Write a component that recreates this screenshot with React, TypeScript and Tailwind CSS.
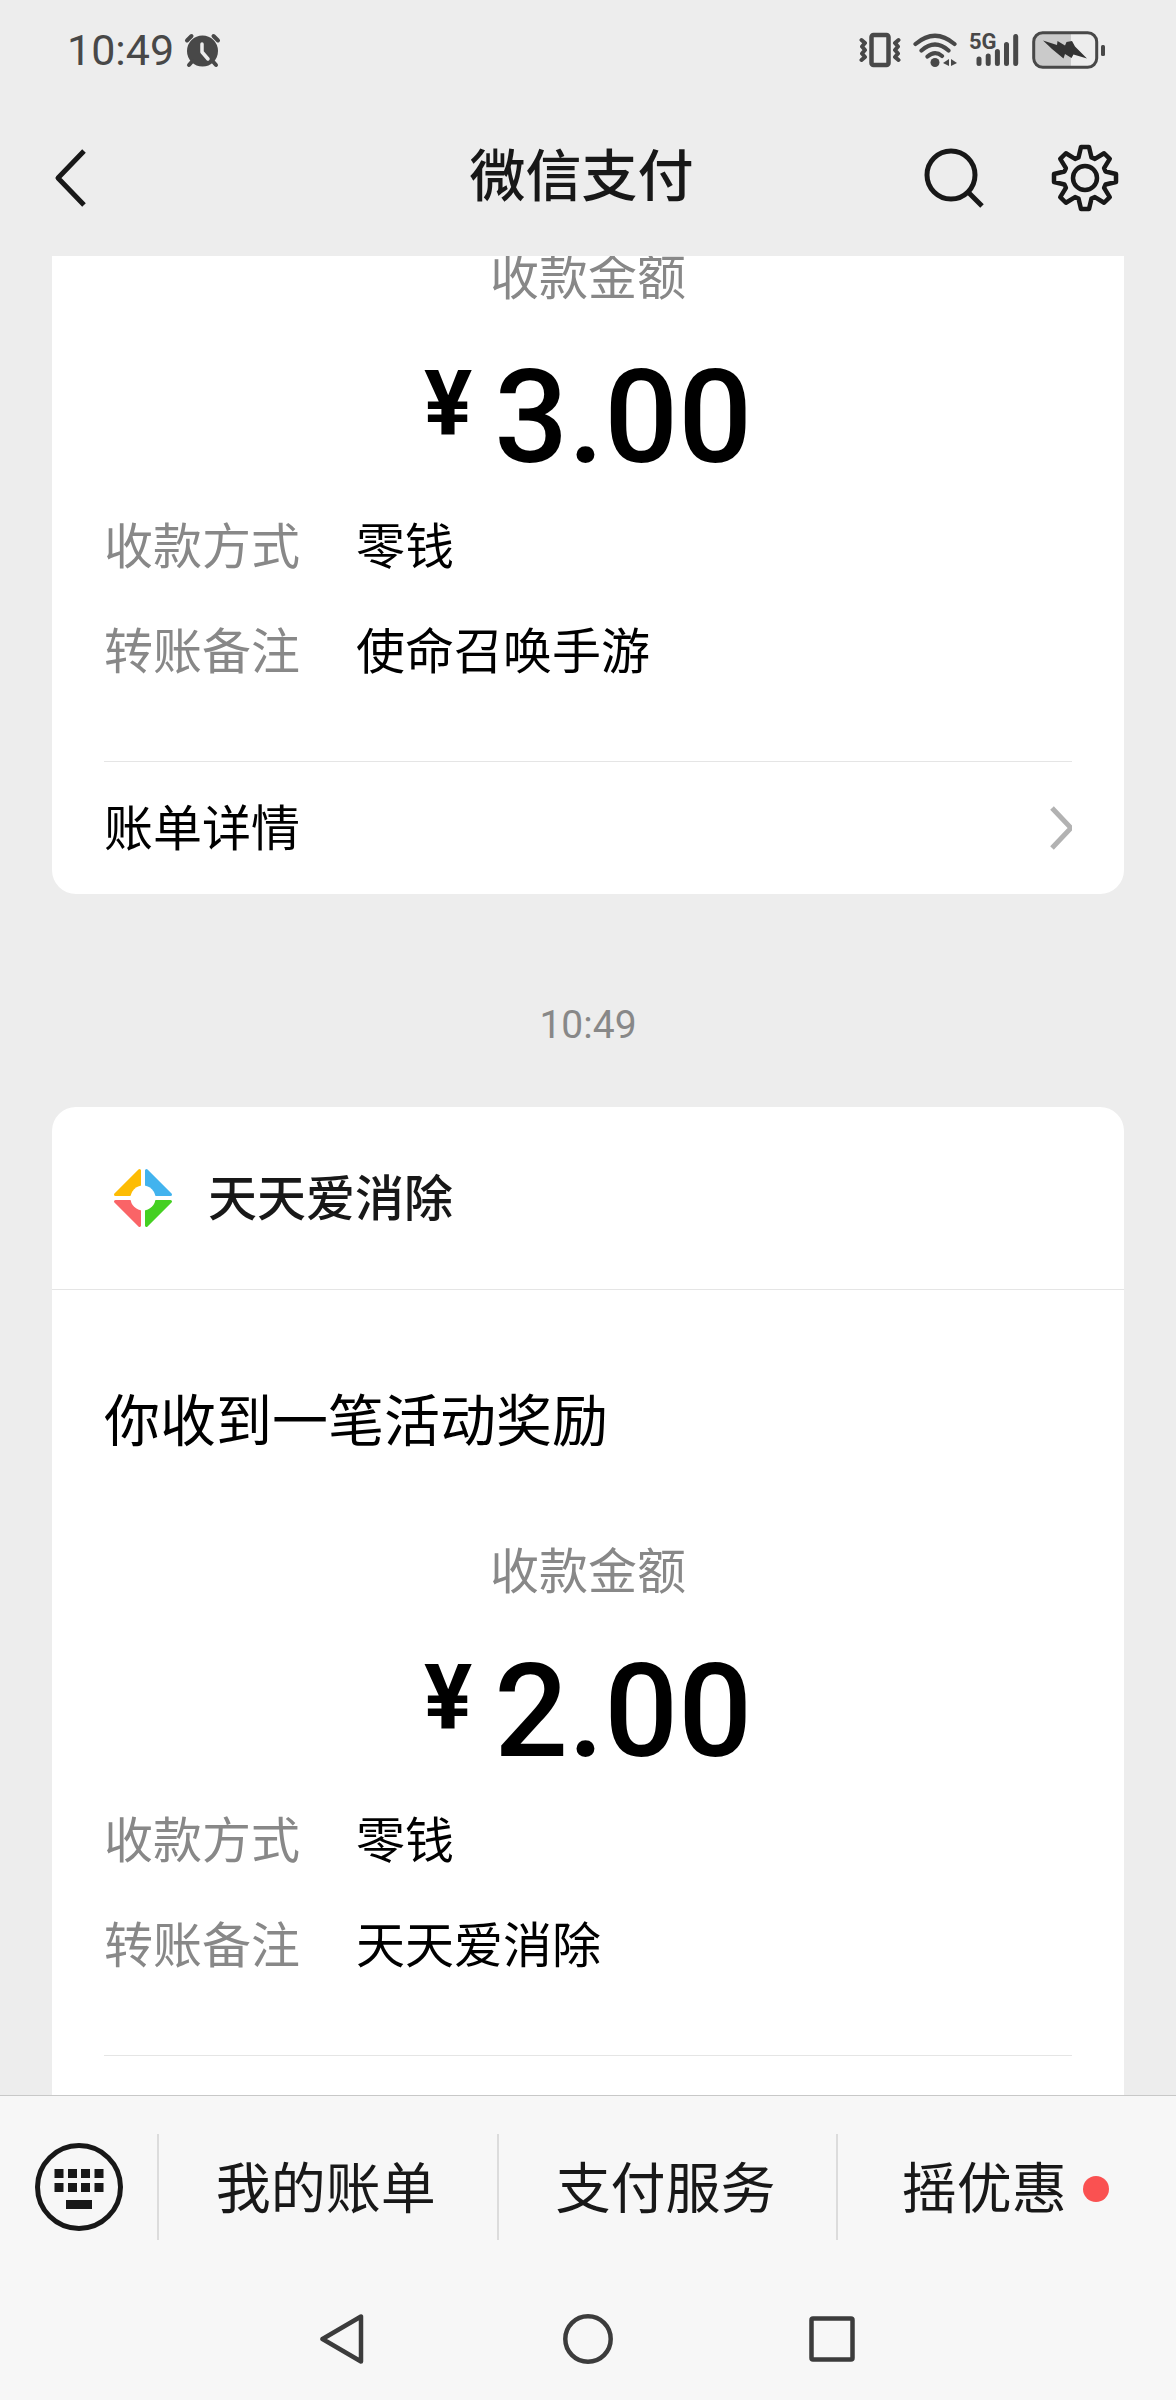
import React from "react";

type Row = { label: string; value: string };

const StatusBar: React.FC = () => {
  return (
    <div className="flex h-[100px] items-center justify-between pl-[67px] pr-[70px] text-[#484848]">
      <div className="flex items-center gap-[10px]">
        <time className="font-['Roboto',sans-serif] text-[43px] leading-none">10:49</time>
        <svg aria-label="闹钟" width="37" height="35" viewBox="0 0 37 35" fill="none" stroke="currentColor" strokeWidth="4" strokeLinecap="round">
          <circle cx="18.5" cy="18" r="15.5" fill="currentColor" stroke="none" />
          <path d="M3 7.5L7.5 3M34 7.5L29.5 3M8.5 28L5 32M28.5 28L32 32" />
          <path d="M18 11V19L24 26" stroke="#ededed" strokeWidth="3.5" strokeLinejoin="round" />
        </svg>
      </div>
      <div className="flex items-center gap-3">
        <svg aria-label="振动" width="42" height="36" viewBox="0 0 42 36" fill="none" stroke="currentColor" strokeWidth="4.5" strokeLinejoin="round" strokeLinecap="round">
          <rect x="12.5" y="3" width="17" height="30" rx="2" />
          <path d="M2.500 8L6 11L3 14.500L6 18L3 21.500L6 25L2.500 28M39.500 8L36 11L39 14.500L36 18L39 21.500L36 25L39.500 28" strokeWidth="4" />
        </svg>
        <svg aria-label="无线网络" width="44" height="36" viewBox="0 0 44 36" fill="none" stroke="currentColor" strokeWidth="4.200" strokeLinecap="round">
          <path d="M2.500 12Q22 -4.500 41.500 12M8.500 18.500Q22 6.500 35.500 18.500M14.500 24.500Q22 18 29 24" />
          <circle cx="22" cy="30.500" r="4.500" fill="currentColor" stroke="none" />
          <path d="M30 31L36 27V34ZM44 31L38 27V34Z" fill="currentColor" stroke="none" />
        </svg>
        <svg aria-label="5G 信号" width="51" height="36" viewBox="0 0 51 36" fill="none" stroke="currentColor" strokeWidth="5" strokeLinecap="round" className="overflow-visible">
          <text x="0" y="17" fill="currentColor" stroke="none" fontFamily="Roboto, sans-serif" fontWeight="700" fontSize="22">5G</text>
          <path d="M10 27V31.500M19.200 24V31.500M28.400 19.500V31.500M37.500 12.500V31.500M46.700 4.500V31.500" />
        </svg>
        <svg aria-label="正在充电" width="74" height="38" viewBox="0 0 74 38" fill="none">
          <path d="M10 2H39V36H10Q2 36 2 28V10Q2 2 10 2Z" fill="#cacaca" />
          <rect x="1.700" y="1.700" width="63" height="34.600" rx="9" stroke="currentColor" strokeWidth="3" />
          <path d="M11 9.500L25 14L25.500 10L33 14.500L34.500 11L40 10L43 15.500L55 27.500L41.500 23.500L39.500 27L33 23L31.500 27.500L20 18Z" fill="#333" />
          <rect x="69" y="14" width="4" height="11" rx="1.500" fill="currentColor" />
        </svg>
      </div>
    </div>
  );
};

// one tooth of the gear, repeated every 45 degrees
const TOOTH = [[-6.5, -20.5], [-4, -31], [4, -31], [6.5, -20.5]];

const GearIcon: React.FC = () => {
  const points = Array.from({ length: 8 }).flatMap((_, i) => {
    const a = (i * Math.PI) / 4;
    return TOOTH.map(([x, y]) => `${x * Math.cos(a) - y * Math.sin(a)},${x * Math.sin(a) + y * Math.cos(a)}`);
  });
  return (
    <svg width="68" height="68" viewBox="-34 -34 68 68" fill="none" stroke="currentColor" strokeWidth="4.500" strokeLinejoin="round">
      <polygon points={points.join(" ")} />
      <circle r="12" />
    </svg>
  );
};

const TitleBar: React.FC = () => {
  return (
    <div className="grid h-[156px] grid-cols-[1fr_auto_1fr] items-center pl-[52px] pr-[57px] text-[#181818]">
      <button type="button" aria-label="返回" className="justify-self-start">
        <svg width="36" height="60" viewBox="0 0 36 60" fill="none" stroke="currentColor" strokeWidth="5" strokeLinejoin="round">
          <path d="M32 3L6 30L32 57" />
        </svg>
      </button>
      <h1 className="pb-3 pr-2 text-[56px] font-medium leading-[64px]">微信支付</h1>
      <div className="flex items-center gap-[67px] justify-self-end">
        <button type="button" aria-label="搜索">
          <svg width="62" height="62" viewBox="0 0 62 62" fill="none" stroke="currentColor" strokeWidth="5">
            <circle cx="29" cy="28" r="24" />
            <path d="M46 45L60 59" />
          </svg>
        </button>
        <button type="button" aria-label="设置">
          <GearIcon />
        </button>
      </div>
    </div>
  );
};

const Receipt: React.FC<{ amount: string; rows: Row[] }> = ({ amount, rows }) => {
  return (
    <div className="border-b border-[#e5e5e5] pb-[85px]">
      <p className="text-center text-[49px] leading-[56px] text-[#888]">收款金额</p>
      <p className="mt-[51px] flex items-start justify-center gap-[22px] font-['Roboto',sans-serif] text-[130px] font-medium leading-none">
        <span className="mt-[7px] text-[90px] font-bold leading-none">¥</span>
        <span>{amount}</span>
      </p>
      <dl className="mt-8 flex flex-col gap-[49px] text-[49px] leading-[56px]">
        {rows.map((row) => (
          <div key={row.label} className="grid grid-cols-[252px_1fr]">
            <dt className="text-[#888]">{row.label}</dt>
            <dd>{row.value}</dd>
          </div>
        ))}
      </dl>
    </div>
  );
};

const PayLogo: React.FC = () => {
  return (
    <svg aria-hidden="true" width="60" height="60" viewBox="0 0 60 60" strokeWidth="3" strokeLinejoin="round">
      <path d="M26.500 2.500V17.500A13.500 13.500 0 0 0 17 26.500H2.500Z" fill="#fdbc04" stroke="#fdbc04" />
      <path d="M33.500 2.500V17.500A13.500 13.500 0 0 1 43 26.500H57.500Z" fill="#42b3ee" stroke="#42b3ee" />
      <path d="M26.500 57.500V42.500A13.500 13.500 0 0 1 17 33.500H2.500Z" fill="#fa6467" stroke="#fa6467" />
      <path d="M33.500 57.500V42.500A13.500 13.500 0 0 0 43 33.500H57.500Z" fill="#45d022" stroke="#45d022" />
      <circle cx="30" cy="30" r="12.500" fill="#fff" />
    </svg>
  );
};

const BottomMenu: React.FC = () => {
  return (
    <nav className="flex h-[182px] items-center text-[55px] leading-[64px] text-[#181818]">
      <button type="button" aria-label="键盘" className="w-[157px] pl-[35px]">
        <svg width="88" height="88" viewBox="0 0 88 88" fill="none">
          <circle cx="44" cy="44" r="41.500" stroke="currentColor" strokeWidth="5" />
          <path d="M19.500 26h9v9h-9zM33 26h9v9h-9zM46 26h9v9h-9zM59.500 26h9v9h-9zM19.500 40h9v9h-9zM33 40h9v9h-9zM46 40h9v9h-9zM59.500 40h9v9h-9zM31 57h26v9h-26z" fill="currentColor" />
        </svg>
      </button>
      <button type="button" className="h-[106px] flex-1 border-l-2 border-[#dcdcdc] pb-[6px] pr-1">我的账单</button>
      <button type="button" className="h-[106px] flex-1 border-l-2 border-[#dcdcdc] pb-[6px] pr-1">支付服务</button>
      <button type="button" className="flex h-[106px] flex-1 items-center justify-center gap-4 border-l-2 border-[#dcdcdc] pr-1">
        <span className="pb-[6px]">摇优惠</span>
        <span className="mt-[3px] size-[26px] rounded-full bg-[#fa5151]"></span>
      </button>
    </nav>
  );
};

const SystemNav: React.FC = () => {
  return (
    <div className="flex h-[122px] items-center justify-center gap-[195px] text-[#3c3c3c]">
      <button type="button" aria-label="系统返回">
        <svg width="50" height="50" viewBox="0 0 50 50" fill="none" stroke="currentColor" strokeWidth="4.500" strokeLinejoin="round">
          <path d="M43 2.500V47.500L4.500 25Z" />
        </svg>
      </button>
      <button type="button" aria-label="主屏幕">
        <svg width="50" height="50" viewBox="0 0 50 50" fill="none" stroke="currentColor" strokeWidth="4.500">
          <circle cx="25" cy="25" r="22.700" />
        </svg>
      </button>
      <button type="button" aria-label="最近任务">
        <svg width="50" height="50" viewBox="0 0 50 50" fill="none" stroke="currentColor" strokeWidth="4.500">
          <rect x="3.500" y="4.500" width="41" height="41" rx="1.500" />
        </svg>
      </button>
    </div>
  );
};

const App: React.FC = () => {
  return (
    <div className="flex min-h-screen flex-col bg-[#ededed] font-['Noto_Sans_CJK_SC',sans-serif] text-black">
      <header>
        <StatusBar />
        <TitleBar />
      </header>
      <main className="flex flex-1 flex-col overflow-hidden px-[52px]">
        {/* scrolled so that the first card starts in the middle of its amount label */}
        <article className="-mt-[10px] rounded-b-3xl bg-white px-[52px]">
          <Receipt
            amount="3.00"
            rows={[
              { label: "收款方式", value: "零钱" },
              { label: "转账备注", value: "使命召唤手游" },
            ]}
          />
          <a href="#" className="flex h-[132px] items-center justify-between text-[49px] leading-[56px]">
            <span className="pb-[6px]">账单详情</span>
            <svg width="22" height="44" viewBox="0 0 22 44" fill="none" stroke="#b2b2b2" strokeWidth="5">
              <path d="M2 2L21 22L2 42" />
            </svg>
          </a>
        </article>
        <time className="pb-[58px] pt-[107px] text-center font-['Roboto',sans-serif] text-[39px] leading-[48px] text-[#888]">10:49</time>
        <article className="flex-1 rounded-t-3xl bg-white">
          <header className="flex h-[183px] items-center gap-[35px] border-b border-[#e5e5e5] px-[61px]">
            <PayLogo />
            <h2 className="pb-[6px] text-[49px] font-medium leading-[56px] text-[#181818]">天天爱消除</h2>
          </header>
          <div className="px-[52px] pt-[95px]">
            <h3 className="mb-[91px] text-[56px] leading-[64px]">你收到一笔活动奖励</h3>
            <Receipt
              amount="2.00"
              rows={[
                { label: "收款方式", value: "零钱" },
                { label: "转账备注", value: "天天爱消除" },
              ]}
            />
          </div>
        </article>
      </main>
      <footer className="border-t border-[#c8c8c8] bg-[#f7f7f7]">
        <BottomMenu />
        <SystemNav />
      </footer>
    </div>
  );
};

export default App;
